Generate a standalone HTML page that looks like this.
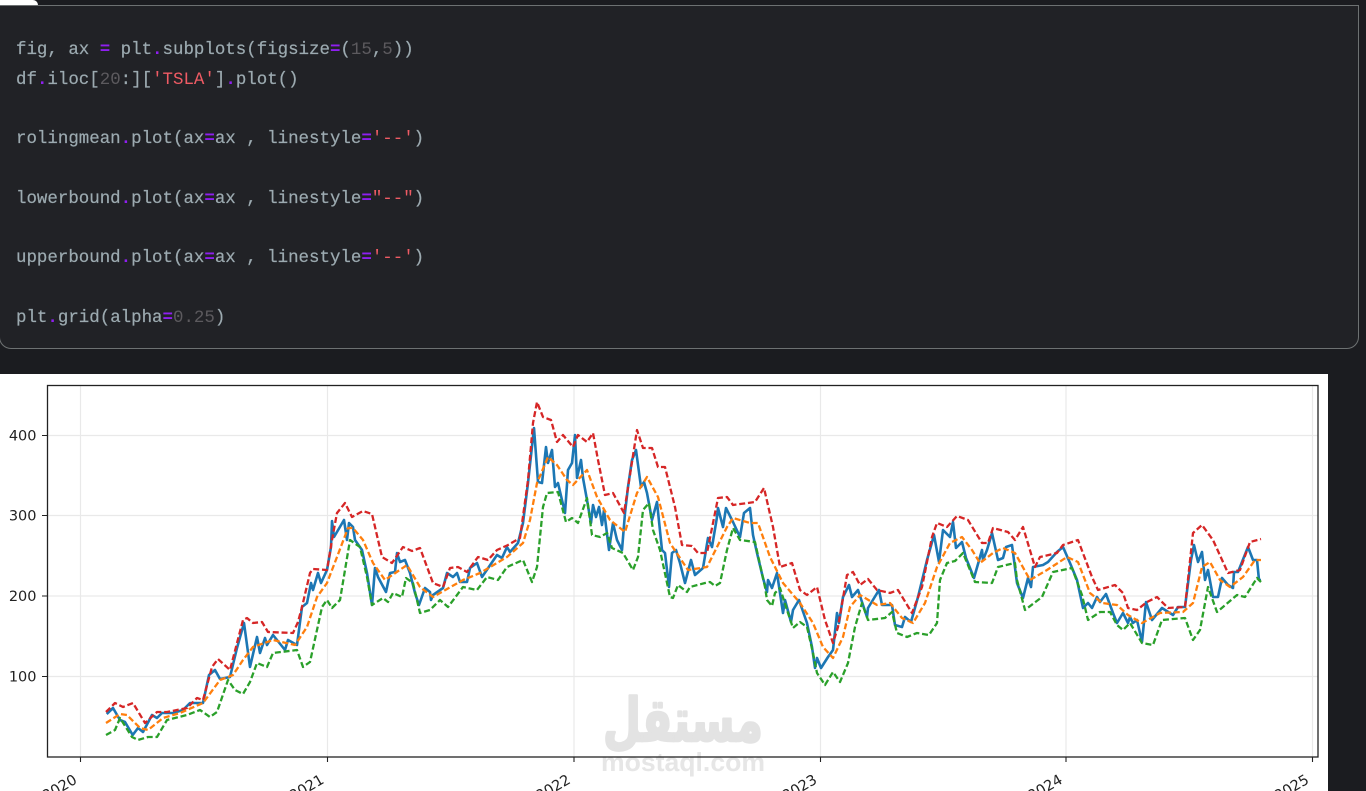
<!DOCTYPE html>
<html>
<head>
<meta charset="utf-8">
<style>
html,body{margin:0;padding:0;width:1366px;height:791px;overflow:hidden;background:#1b1c20}
#box{position:absolute;left:-1px;top:5px;width:1358px;height:342px;background:#212226;border:1px solid #6d7172;border-radius:0 0 12px 12px;box-sizing:content-box}
#tab{position:absolute;left:0;top:0;width:38px;height:5px;background:#fff;border-radius:0 5px 0 0}
pre{position:absolute;left:16px;top:36px;margin:0;font:17.45px/29.75px "Liberation Mono","DejaVu Sans Mono",monospace;color:#9caab0;-webkit-text-stroke:.2px #9caab0}
pre i{font-style:normal;color:#8f1ff0;font-weight:bold;-webkit-text-stroke:0}
pre b{font-weight:normal;color:#5c5a5e;-webkit-text-stroke:0}
pre u{text-decoration:none;color:#ef5b64;-webkit-text-stroke:0}
svg{position:absolute;left:0;top:374px}
text{font-family:"DejaVu Sans",sans-serif}
</style>
</head>
<body>
<div id="box"></div>
<div id="tab"></div>
<pre>fig, ax <i>=</i> plt<i>.</i>subplots(figsize<i>=</i>(<b>15</b>,<b>5</b>))
df<i>.</i>iloc[<b>20</b>:][<u>'TSLA'</u>]<i>.</i>plot()

rolingmean<i>.</i>plot(ax<i>=</i>ax , linestyle<i>=</i><u>'--'</u>)

lowerbound<i>.</i>plot(ax<i>=</i>ax , linestyle<i>=</i><u>"--"</u>)

upperbound<i>.</i>plot(ax<i>=</i>ax , linestyle<i>=</i><u>'--'</u>)

plt<i>.</i>grid(alpha<i>=</i><b>0.25</b>)</pre>

<svg width="1328" height="417" viewBox="0 374 1328 417">
<defs><filter id="b" filterUnits="userSpaceOnUse" x="0" y="374" width="1328" height="417"><feGaussianBlur stdDeviation="0.35"/></filter></defs>
<rect x="0" y="374" width="1328" height="417" fill="#fff"/>
<g stroke="#e9e9e9" stroke-width="1.2" fill="none">
<path d="M80.5 386V757M327.5 386V757M574 386V757M820.5 386V757M1066 386V757M1312.5 386V757"/>
<path d="M48 435.5H1318M48 515.5H1318M48 596H1318M48 676.5H1318"/>
</g>
<g fill="#e3e3e3" filter="url(#b)">
<text x="683" y="741" text-anchor="middle" font-size="60" font-weight="bold" stroke="#e3e3e3" stroke-width="2.5" stroke-linejoin="round" textLength="160" lengthAdjust="spacingAndGlyphs" style="font-family:'DejaVu Sans','Noto Sans CJK SC',sans-serif" direction="rtl">مستقل</text>
<text x="683" y="771" text-anchor="middle" font-size="26" font-weight="bold" fill="#e6e6e6" textLength="164" lengthAdjust="spacingAndGlyphs" style="font-family:'Liberation Sans',sans-serif">mostaql.com</text>
</g>
<g fill="none" stroke-linejoin="round" filter="url(#b)">
<polyline stroke="#1f77b4" stroke-width="2.6" points="106.7,714 113,708 120,720 125,722 132.7,735 138,728 143,732 152,715 157,718 162,713 173,713 183,710 190,703 203,703 209,675 215,670 220,679 230,677 237,648 244,623 250,667 257,637 260,653 265,638 267,645 273,635 285,650 288,640 297,645 302,607 307,603 311,583 313,590 318,573 321,583 327,570 331,547 332,521 334,537 344,520 347,540 349,523 353,527 355,540 362,550 367,573 372,605 375,568 378,577 386,592 390,573 395,572 397,553 400,562 405,560 410,573 415,593 419,605 425,588 430,592 431,600 433,595 443,588 447,573 453,577 457,573 460,582 467,582 470,568 477,563 482,577 497,555 502,558 507,547 510,552 518,543 523,523 528,483 534,428 538,482 542,483 546,447 548,463 552,450 555,487 558,483 565,513 568,470 572,463 575,435 577,478 581,460 583,478 587,500 591,523 593,505 596,517 599,507 602,525 604,510 609,550 613,523 617,540 622,550 625,513 628,487 632,460 636,450 641,487 644,482 647,493 652,520 657,502 662,550 665,553 669,587 672,553 676,550 680,563 685,583 691,560 695,575 703,568 708,538 712,547 717,517 718,508 723,527 726,508 733,522 740,537 744,513 750,508 753,535 757,553 763,578 767,592 768,580 772,588 777,573 783,613 785,600 791,622 793,610 799,600 807,623 812,647 815,668 817,658 821,668 828,657 833,650 837,613 839,623 843,597 849,585 852,597 858,590 867,617 868,608 879,590 882,605 892,605 895,625 902,627 905,617 911,622 918,597 927,560 934,535 939,562 943,530 950,537 953,522 956,548 962,542 966,558 974,578 982,550 983,560 987,550 992,533 998,560 1003,558 1006,547 1012,545 1017,583 1023,598 1028,578 1031,587 1033,567 1043,565 1048,562 1057,552 1063,547 1070,563 1077,580 1083,608 1088,603 1092,608 1097,597 1100,602 1106,594 1113,613 1117,623 1123,613 1128,623 1130,617 1133,623 1137,620 1142,642 1146,602 1152,620 1162,608 1173,615 1178,607 1185,607 1191,560 1194,545 1198,562 1202,552 1205,580 1208,570 1213,597 1218,597 1222,578 1228,585 1233,588 1234,572 1238,572 1248,547 1253,560 1257,560 1259,580 1261,580"/>
<g stroke-width="2.3" stroke-dasharray="6 2.8">
<polyline stroke="#ff7f0e" points="106,723 120,714 127,715 140,728 148,730 163,718 180,713 203,703 220,680 233,675 243,660 253,647 273,640 295,645 307,627 317,597 327,583 337,557 348,528 353,528 363,540 373,563 385,580 407,565 420,587 433,597 463,580 480,573 507,557 523,543 530,520 537,483 548,457 557,465 567,480 573,485 587,470 597,497 610,520 625,532 637,493 647,477 658,497 670,543 688,570 707,567 727,527 733,518 750,523 758,523 770,557 783,583 800,603 813,623 823,647 833,658 843,637 850,607 860,595 877,605 890,603 902,618 913,623 925,603 937,567 950,543 962,537 972,550 980,563 993,553 1003,548 1015,553 1030,580 1047,570 1067,557 1078,562 1090,593 1102,603 1117,605 1128,615 1142,623 1160,613 1183,612 1193,603 1202,567 1210,562 1220,580 1230,587 1243,577 1255,560 1261,560"/>
<polyline stroke="#2ca02c" points="106,735 115,730 120,718 132,737 138,740 148,737 157,737 167,720 187,715 200,710 210,717 217,712 228,680 235,690 243,694 250,682 257,663 267,667 273,653 297,650 303,667 310,662 322,607 327,600 332,608 340,600 350,540 360,547 367,577 372,605 383,598 388,602 393,593 402,597 406,578 413,583 420,613 430,610 440,600 448,607 463,587 477,590 487,577 498,580 507,567 523,560 532,582 537,567 543,507 547,493 558,492 566,522 572,518 578,523 587,498 592,535 600,537 607,533 612,548 623,553 633,570 638,557 643,510 649,503 653,530 660,550 670,597 673,598 678,585 687,592 690,587 705,583 710,582 715,586 720,583 727,550 733,528 740,540 755,542 765,587 767,600 772,606 775,593 780,588 787,610 793,628 800,622 807,627 813,653 817,673 825,685 833,672 840,682 848,663 855,627 862,603 868,620 885,618 892,612 897,633 907,637 917,633 929,635 937,623 940,580 947,563 955,561 963,553 975,582 992,583 998,567 1015,563 1017,580 1025,610 1042,597 1053,572 1072,568 1082,595 1088,620 1100,612 1110,612 1117,625 1123,630 1130,623 1142,643 1153,645 1162,620 1185,618 1193,640 1200,630 1208,587 1217,612 1237,595 1245,597 1257,578 1261,582"/>
<polyline stroke="#d62728" points="106,712 115,703 123,707 133,703 145,723 157,712 167,712 187,708 197,698 203,700 212,667 218,659 230,670 243,620 247,618 253,623 262,622 268,632 293,633 298,622 302,607 310,573 313,569 327,570 332,540 337,513 345,503 352,517 363,511 372,514 382,557 392,563 403,547 412,551 420,548 433,583 443,587 450,568 458,567 467,572 478,557 488,560 497,550 508,545 520,538 528,480 533,423 537,402 543,417 551,420 557,442 563,435 573,447 578,435 587,442 593,433 598,460 605,495 613,493 624,513 637,430 643,448 652,448 658,467 665,467 675,507 682,545 692,546 698,553 707,553 718,498 727,497 733,505 755,502 764,488 773,527 780,567 792,563 800,590 807,595 817,587 825,620 833,643 838,627 847,575 853,572 860,585 868,579 877,590 890,593 898,590 912,613 922,587 932,537 937,523 947,527 957,516 968,520 982,543 988,543 993,528 1008,532 1015,540 1023,527 1035,567 1040,557 1057,553 1063,545 1078,540 1092,577 1098,590 1115,585 1123,593 1128,608 1137,610 1147,602 1157,597 1168,608 1185,607 1193,533 1202,525 1213,540 1228,573 1240,570 1250,542 1261,539"/>
</g>
</g>
<rect x="47.5" y="385.5" width="1270.5" height="371.5" fill="none" stroke="#222" stroke-width="1.3"/>
<g stroke="#222" stroke-width="1.1">
<path d="M42 435.5H47M42 515.5H47M42 596H47M42 676.5H47"/>
<path d="M80.5 757V762M327.5 757V762M574 757V762M820.5 757V762M1066 757V762M1312.5 757V762"/>
</g>
<g font-size="14.5" fill="#222" text-anchor="end">
<text x="36.5" y="440.5">400</text>
<text x="36.5" y="520.5">300</text>
<text x="36.5" y="601">200</text>
<text x="36.5" y="681.5">100</text>
<text transform="translate(78 782.5) rotate(-30)">2020</text>
<text transform="translate(325 782.5) rotate(-30)">2021</text>
<text transform="translate(571.5 782.5) rotate(-30)">2022</text>
<text transform="translate(818 782.5) rotate(-30)">2023</text>
<text transform="translate(1063.5 782.5) rotate(-30)">2024</text>
<text transform="translate(1310 782.5) rotate(-30)">2025</text>
</g>
</svg>
</body>
</html>
